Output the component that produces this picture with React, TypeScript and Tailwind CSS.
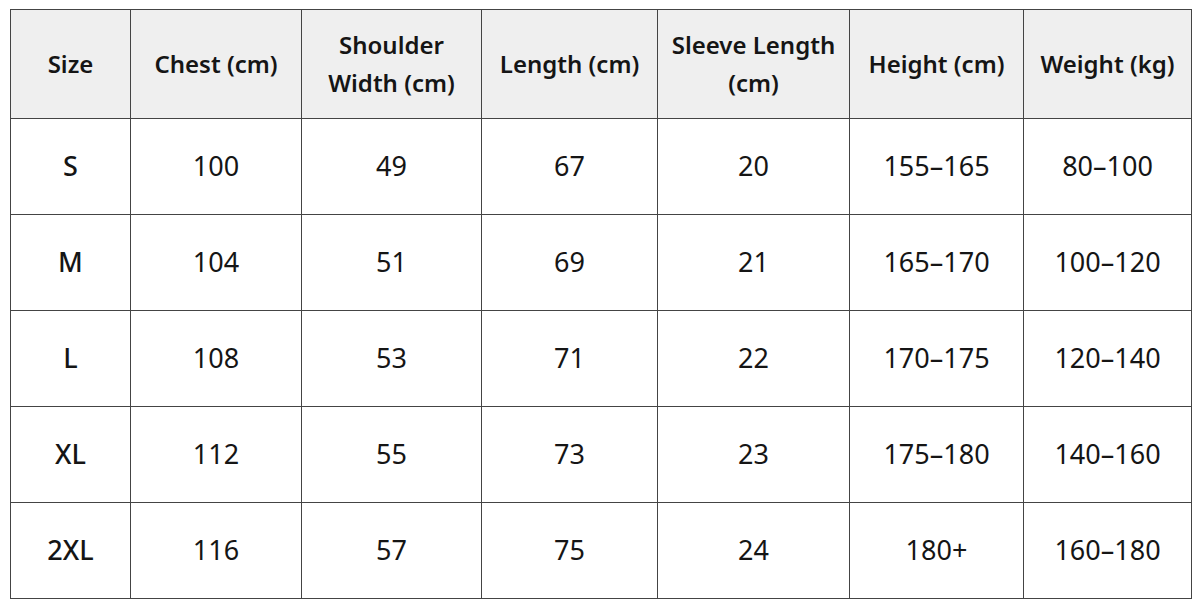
const headers = [
  "Size",
  "Chest (cm)",
  "Shoulder Width (cm)",
  "Length (cm)",
  "Sleeve Length (cm)",
  "Height (cm)",
  "Weight (kg)",
];

const widths = [
  "w-[120px]",
  "w-[171px]",
  "w-[180px]",
  "w-[176px]",
  "w-[192px]",
  "w-[174px]",
  "w-[168px]",
];

const rows = [
  ["S", "100", "49", "67", "20", "155–165", "80–100"],
  ["M", "104", "51", "69", "21", "165–170", "100–120"],
  ["L", "108", "53", "71", "22", "170–175", "120–140"],
  ["XL", "112", "55", "73", "23", "175–180", "140–160"],
  ["2XL", "116", "57", "75", "24", "180+", "160–180"],
];

export default function App() {
  return (
    <div className="w-[1200px] h-[610px] bg-white pl-[10px] pt-[9px] font-['Noto_Sans',sans-serif] text-[#151515]">
      <table className="table-fixed border-collapse border border-[#444]">
        <thead>
          <tr>
            {headers.map((h, i) => (
              <th
                key={h}
                className={`${widths[i]} h-[109px] border border-[#444] bg-[#efefef] px-3 text-center text-[24px] leading-[38px] font-semibold`}
              >
                {h}
              </th>
            ))}
          </tr>
        </thead>
        <tbody>
          {rows.map((row) => (
            <tr key={row[0]}>
              {row.map((cell, i) => (
                <td
                  key={i}
                  className={`h-[96px] border border-[#444] text-center text-[27px] ${
                    i === 0 ? "font-medium" : "font-normal"
                  }`}
                >
                  {cell}
                </td>
              ))}
            </tr>
          ))}
        </tbody>
      </table>
    </div>
  );
}
